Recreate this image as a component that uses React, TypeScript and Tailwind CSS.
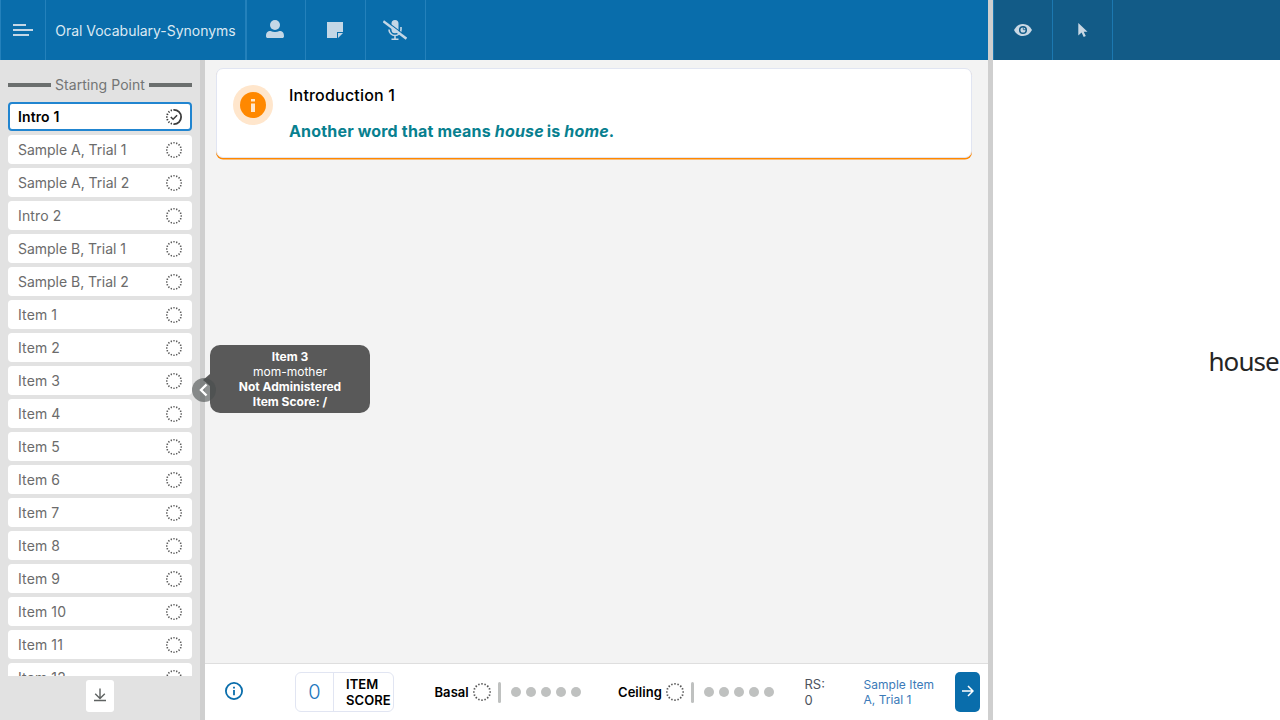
import React from "react";

const items: string[] = [
  "Intro 1",
  "Sample A, Trial 1",
  "Sample A, Trial 2",
  "Intro 2",
  "Sample B, Trial 1",
  "Sample B, Trial 2",
  "Item 1",
  "Item 2",
  "Item 3",
  "Item 4",
  "Item 5",
  "Item 6",
  "Item 7",
  "Item 8",
  "Item 9",
  "Item 10",
  "Item 11",
  "Item 12",
];

function DottedCircle({ size = 16 }: { size?: number }) {
  return (
    <svg width={size} height={size} viewBox="0 0 16 16" className="shrink-0">
      <circle cx="8" cy="8" r="7.2" fill="none" stroke="#555" strokeWidth="1.6" pathLength="32" strokeDasharray="0.9 1.1" strokeDashoffset="0.45" />
    </svg>
  );
}

function StartedCircle() {
  return (
    <svg width="16" height="16" viewBox="0 0 16 16" fill="none" stroke="#3c3c3c" className="shrink-0">
      <path d="M8 .9A7.1 7.1 0 0 1 8 15.1" strokeWidth="1.8" />
      <path d="M8 15.1A7.1 7.1 0 0 1 8 .9" strokeWidth="1.8" pathLength="16" strokeDasharray="0.9 1.1" strokeDashoffset="0.45" />
      <path d="M4.8 8l2.3 2.3 4-4" strokeWidth="1.5" />
    </svg>
  );
}

function SidebarItem({ label, active }: { label: string; active: boolean }) {
  return (
    <div
      className={
        active
          ? "flex h-[29px] shrink-0 items-center justify-between rounded-[4px] border-2 border-[#2185d0] bg-white px-2 text-sm font-semibold text-black"
          : "flex h-[29px] shrink-0 items-center justify-between rounded-[4px] bg-white px-2.5 text-sm text-[#6b6b6b]"
      }
    >
      <span className={label.startsWith("I") ? "tracking-[0.12px]" : "tracking-[-0.02px]"}>{label}</span>
      {active ? <StartedCircle /> : <DottedCircle />}
    </div>
  );
}

function Sidebar() {
  return (
    <aside className="relative flex w-[205px] shrink-0 flex-col border-r-[5px] border-[#cfcfcf] bg-[#e2e2e2]">
      <div className="flex h-[616px] flex-col gap-1 overflow-hidden px-2 pt-[13px]">
        <div className="mb-[1px] flex h-6 shrink-0 items-center gap-1 text-sm text-[#737575]">
          <span className="h-1 flex-1 bg-[#6b6f6e]" />
          <span className="whitespace-nowrap tracking-[0.05px]">Starting Point</span>
          <span className="h-1 flex-1 bg-[#6b6f6e]" />
        </div>
        {items.map((label, i) => (
          <SidebarItem key={label} label={label} active={i === 0} />
        ))}
      </div>
      <button className="mx-auto mt-1 flex h-8 w-7 items-center justify-center rounded-[3px] bg-white">
        <svg width="14" height="14" viewBox="0 0 14 14" fill="none" stroke="#5f6362" strokeWidth="1.4" className="-mt-0.5">
          <path d="M7 .5v9.7M2.2 5.7L7 10.4l4.800-4.700M1 12.500h12" />
        </svg>
      </button>
    </aside>
  );
}

function Header() {
  return (
    <header className="flex h-[60px] shrink-0 border-l border-[#2481bb] bg-[#096dab] text-[#c4d7e6]">
      <button className="flex w-[45px] items-center justify-center border-r border-[#2481bb]">
        <svg width="20" height="12" viewBox="0 0 20 12" fill="currentColor">
          <path d="M0 0h13v2H0zM0 5h20v2H0zM0 10h16v2H0z" />
        </svg>
      </button>
      <div className="flex w-[201px] items-center justify-center whitespace-nowrap border-r-2 border-[#2481bb] pt-0.5 text-sm tracking-[-0.02px] text-[#dbe9f3]">
        Oral Vocabulary-Synonyms
      </div>
      <button className="flex w-[59px] items-center justify-center border-r border-[#2481bb] pr-0.5 pb-0.5">
        <svg width="18" height="18" viewBox="0 0 18 18" fill="currentColor">
          <circle cx="9" cy="5" r="5" />
          <path d="M0 16.200C0 12.500 1.500 11 4.500 11c1.500.7 3 1 4.500 1s3-.3 4.500-1c3 0 4.500 1.500 4.500 5.200 0 1-.7 1.800-1.800 1.800H1.800C.7 18 0 17.200 0 16.200z" />
        </svg>
      </button>
      <button className="flex w-[60px] items-center justify-center border-r border-[#2481bb] pr-px">
        <svg width="16" height="16" viewBox="0 0 16 16" fill="currentColor">
          <path d="M0 0h16v10h-6v6H0zM11 11h5l-5 5z" />
        </svg>
      </button>
      <button className="flex w-[60px] items-center justify-center border-r border-[#2481bb] pr-px">
        <svg width="24" height="20" viewBox="0 0 24 20" fill="none" stroke="currentColor" strokeWidth="1.600">
          <path d="M8.500 3.600a3.500 3.500 0 0 1 7 0v6.200a3.500 3.500 0 0 1-7 0z" fill="currentColor" stroke="none" />
          <path d="M6 9.500a6 6 0 0 0 12 0V7M12 15.500v3.500M8.500 19.200h7" />
          <path d="M2 .2l23 17.500" stroke="#096dab" strokeWidth="1.200" />
          <path d="M.3 1.200l23.200 17.500" strokeWidth="2.600" />
        </svg>
      </button>
    </header>
  );
}

function InfoCard() {
  return (
    <section className="mx-auto mt-2 flex h-[90px] w-[756px] rounded-[7px] border border-[#e1e5f2] bg-white pt-4 pl-4 shadow-[0_1.5px_0_#ff8800]">
      <div className="flex size-10 items-center justify-center rounded-full bg-[#ffe6cc]">
        <div className="flex size-[26px] items-center justify-center rounded-full bg-[#ff8800]">
          <svg width="4" height="13" viewBox="0 0 4 13" fill="#ffe6cc">
            <path d="M0 0h4v2.500H0zM0 4.500h4V13H0z" />
          </svg>
        </div>
      </div>
      <div className="ml-4 text-base leading-5">
        <h1 className="font-medium tracking-[0.2px] text-black">Introduction 1</h1>
        <p className="mt-4 whitespace-nowrap font-bold tracking-[0.17px] text-[#08808f]">
          Another word that means <i className="-mr-px">house</i> is <i>home</i>.
        </p>
      </div>
    </section>
  );
}

function RunMeter({ label }: { label: string }) {
  return (
    <div className="flex shrink-0 items-center text-[13px] font-semibold text-black">
      <span className="mr-1 pt-px tracking-[0.05px]">{label}</span>
      <DottedCircle size={18} />
      <span className="ml-[7px] h-[21px] w-[3px] rounded-sm bg-[#bfc1c0]" />
      <span className="ml-2.5 flex gap-[5px]">
        {[0, 1, 2, 3, 4].map((n) => (
          <span key={n} className="size-2.5 rounded-full bg-[#bfc1c0]" />
        ))}
      </span>
    </div>
  );
}

function Footer() {
  return (
    <footer className="flex h-[57px] shrink-0 items-center border-t border-[#dedede] bg-white pl-5">
      <svg width="18" height="18" viewBox="0 0 18 18" fill="none" stroke="#096dab" className="-mt-0.5 shrink-0">
        <circle cx="9" cy="9" r="8.100" strokeWidth="1.800" />
        <path d="M9 4.800v1.600M9 8v5.200" strokeWidth="1.800" />
      </svg>
      <div className="ml-[52px] flex h-10 w-[99px] shrink-0 rounded-[6px] border border-[#e1e5f2]">
        <div className="flex w-[38px] items-center justify-center border-r border-[#e1e5f2] text-xl font-light text-[#2176bd]">0</div>
        <div className="pl-3 pt-[3px] text-[13px] font-semibold leading-4 tracking-[0.08px] text-black">ITEM<br />SCORE</div>
      </div>
      <div className="ml-[40.5px] w-[183.500px]">
        <RunMeter label="Basal" />
      </div>
      <div className="w-[186.500px]">
        <RunMeter label="Ceiling" />
      </div>
      <div className="w-[59px] text-[13px] leading-4 text-[#4d535d]">RS:<br />0</div>
      <div className="w-[91.500px] whitespace-nowrap text-xs leading-[15px] tracking-[0.03px] text-[#3b7ab8]">Sample Item<br />A, Trial 1</div>
      <button className="flex h-10 w-[25px] shrink-0 items-center justify-center rounded-[5px] bg-[#096dab] pb-0.5">
        <svg width="12" height="12" viewBox="0 0 12 12" fill="none" stroke="#fff" strokeWidth="1.500">
          <path d="M0 6h11M6 1l5 5-5 5" />
        </svg>
      </button>
    </footer>
  );
}

function Viewer() {
  return (
    <div className="flex min-w-0 flex-1 flex-col overflow-hidden border-l-[5px] border-[#cfcfcf] bg-white">
      <header className="flex h-[60px] shrink-0 border-l border-[#1c78b0] bg-[#125b87] text-[#c9d8e4]">
        <button className="flex w-[59px] items-center justify-center border-r border-[#1c78b0] pb-px">
          <svg width="18" height="12" viewBox="0 0 18 12">
            <path d="M0 6C2 2.200 5 0 9 0s7 2.200 9 6c-2 3.800-5 6-9 6S2 9.800 0 6z" fill="currentColor" />
            <circle cx="9" cy="6" r="3.300" fill="none" stroke="#125b87" strokeWidth="1.500" />
            <path d="M9.300 3.200V5.700h2.700" fill="none" stroke="#125b87" strokeWidth="0.800" />
          </svg>
        </button>
        <button className="flex w-[60px] items-center justify-center border-r border-[#1c78b0]">
          <svg width="10" height="14" viewBox="0 0 10 14" fill="currentColor">
            <path d="M.3 0L9.500 8.700H5.700l2.100 4.300-2.100 1L3.600 9.600.3 12.500z" />
          </svg>
        </button>
      </header>
      <div className="flex flex-1 items-center pb-[57px] pl-[215.500px] font-['Noto_Sans',sans-serif] text-[26px] tracking-[-0.950px] text-[#252525]">house</div>
    </div>
  );
}

function ItemTooltip() {
  return (
    <>
      <div className="absolute top-[345px] left-[210px] h-[68px] w-40 rounded-[10px] bg-[#595959] pt-1 text-center text-xs leading-[15px] text-white">
        <div className="font-bold">Item 3</div>
        <div>mom-mother</div>
        <div className="font-bold">Not Administered</div>
        <div className="font-bold">Item Score: /</div>
      </div>
      <svg className="absolute top-[374px] left-[203px]" width="7" height="12" viewBox="0 0 7 12">
        <path d="M7 0v12L0 6z" fill="#595959" />
      </svg>
      <svg className="absolute top-[378px] left-[192px]" width="24" height="24" viewBox="0 0 24 24">
        <circle cx="12" cy="12" r="12" fill="#4a4f4e" fillOpacity=".6" />
        <path d="M14.500 6.500L9 12l5.500 5.500" fill="none" stroke="#fff" strokeWidth="2.400" />
      </svg>
    </>
  );
}

export default function App() {
  return (
    <div className="relative flex h-[720px] w-[1280px] overflow-hidden font-['Inter',sans-serif]">
      <div className="flex w-[988px] shrink-0 flex-col">
        <Header />
        <div className="flex min-h-0 flex-1">
          <Sidebar />
          <main className="flex flex-1 flex-col bg-[#f3f3f3]">
            <div className="flex-1 pr-[5px]">
              <InfoCard />
            </div>
            <Footer />
          </main>
        </div>
      </div>
      <Viewer />
      <ItemTooltip />
    </div>
  );
}
